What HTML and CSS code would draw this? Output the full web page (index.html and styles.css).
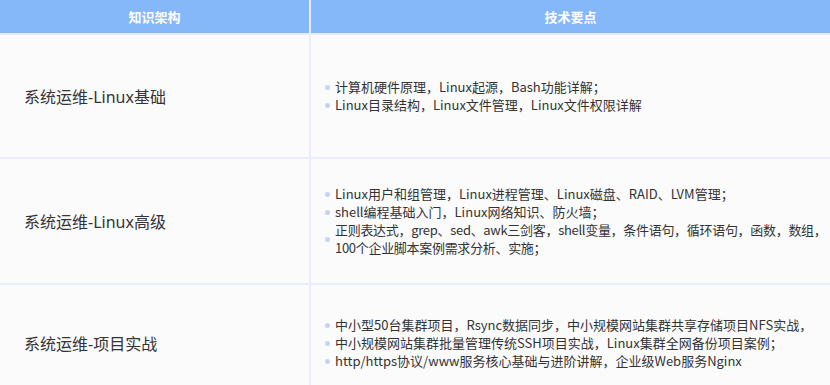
FILE: index.html
```html
<!DOCTYPE html>
<html lang="zh-CN">
<head>
<meta charset="utf-8">
<title>知识架构</title>
<link rel="stylesheet" href="styles.css">
</head>
<body>
<div class="table">
  <div class="row head">
    <div class="cell left">知识架构</div>
    <div class="cell right">技术要点</div>
  </div>
  <div class="row r1">
    <div class="cell left">系统运维-Linux基础</div>
    <div class="cell right">
      <ul class="points">
        <li>计算机硬件原理，Linux起源，Bash功能详解；</li>
        <li>Linux目录结构，Linux文件管理，Linux文件权限详解</li>
      </ul>
    </div>
  </div>
  <div class="row r2">
    <div class="cell left">系统运维-Linux高级</div>
    <div class="cell right">
      <ul class="points">
        <li>Linux用户和组管理，Linux进程管理、Linux磁盘、RAID、LVM管理；</li>
        <li>shell编程基础入门，Linux网络知识、防火墙；</li>
        <li class="tight">正则表达式，grep、sed、awk三剑客，shell变量，条件语句，循环语句，函数，数组，100个企业脚本案例需求分析、实施；</li>
      </ul>
    </div>
  </div>
  <div class="row r3">
    <div class="cell left">系统运维-项目实战</div>
    <div class="cell right">
      <ul class="points">
        <li>中小型50台集群项目，Rsync数据同步，中小规模网站集群共享存储项目NFS实战，</li>
        <li>中小规模网站集群批量管理传统SSH项目实战，Linux集群全网备份项目案例；</li>
        <li>http/https协议/www服务核心基础与进阶讲解，企业级Web服务Nginx</li>
      </ul>
    </div>
  </div>
</div>
</body>
</html>
```
FILE: styles.css
```css
html, body {
  margin: 0;
  padding: 0;
  background: #ffffff;
}
body {
  width: 830px;
  overflow: hidden;
  font-family: "Noto Sans", "Noto Sans CJK SC", sans-serif;
  color: #333333;
}
.table {
  display: flex;
  flex-direction: column;
  width: 830px;
}
.row {
  display: flex;
  border-bottom: 2px solid #e8eefd;
  background: #fbfbfc;
}
.cell {
  display: flex;
  align-items: center;
  box-sizing: border-box;
}
.cell.left {
  flex: none;
  width: 311px;
  border-right: 2px solid #e8eefd;
  padding-left: 24px;
  font-size: 16px;
}
.cell.right {
  flex: 1;
  min-width: 0;
  padding-left: 14px;
  font-family: "Noto Sans CJK SC", sans-serif;
}
.head {
  height: 33px;
  background: #85b8f9;
}
.head .cell {
  justify-content: center;
  color: #ffffff;
  font-size: 13px;
  font-weight: bold;
  padding: 0;
  font-family: "Noto Sans CJK SC", sans-serif;
}
.r1 { height: 122px; }
.r2 { height: 124px; }
.r3 { height: 116px; }
.points {
  flex: none;
  width: 504px;
  list-style: none;
  margin: 0;
  padding: 0;
  font-size: 13px;
  line-height: 18px;
}
.points li {
  display: flex;
  align-items: center;
}
.points li.tight {
  letter-spacing: -0.3px;
}
.points li::before {
  content: "";
  flex: none;
  width: 5px;
  height: 5px;
  border-radius: 50%;
  background: #c3d4f6;
  margin-right: 5px;
}
```
